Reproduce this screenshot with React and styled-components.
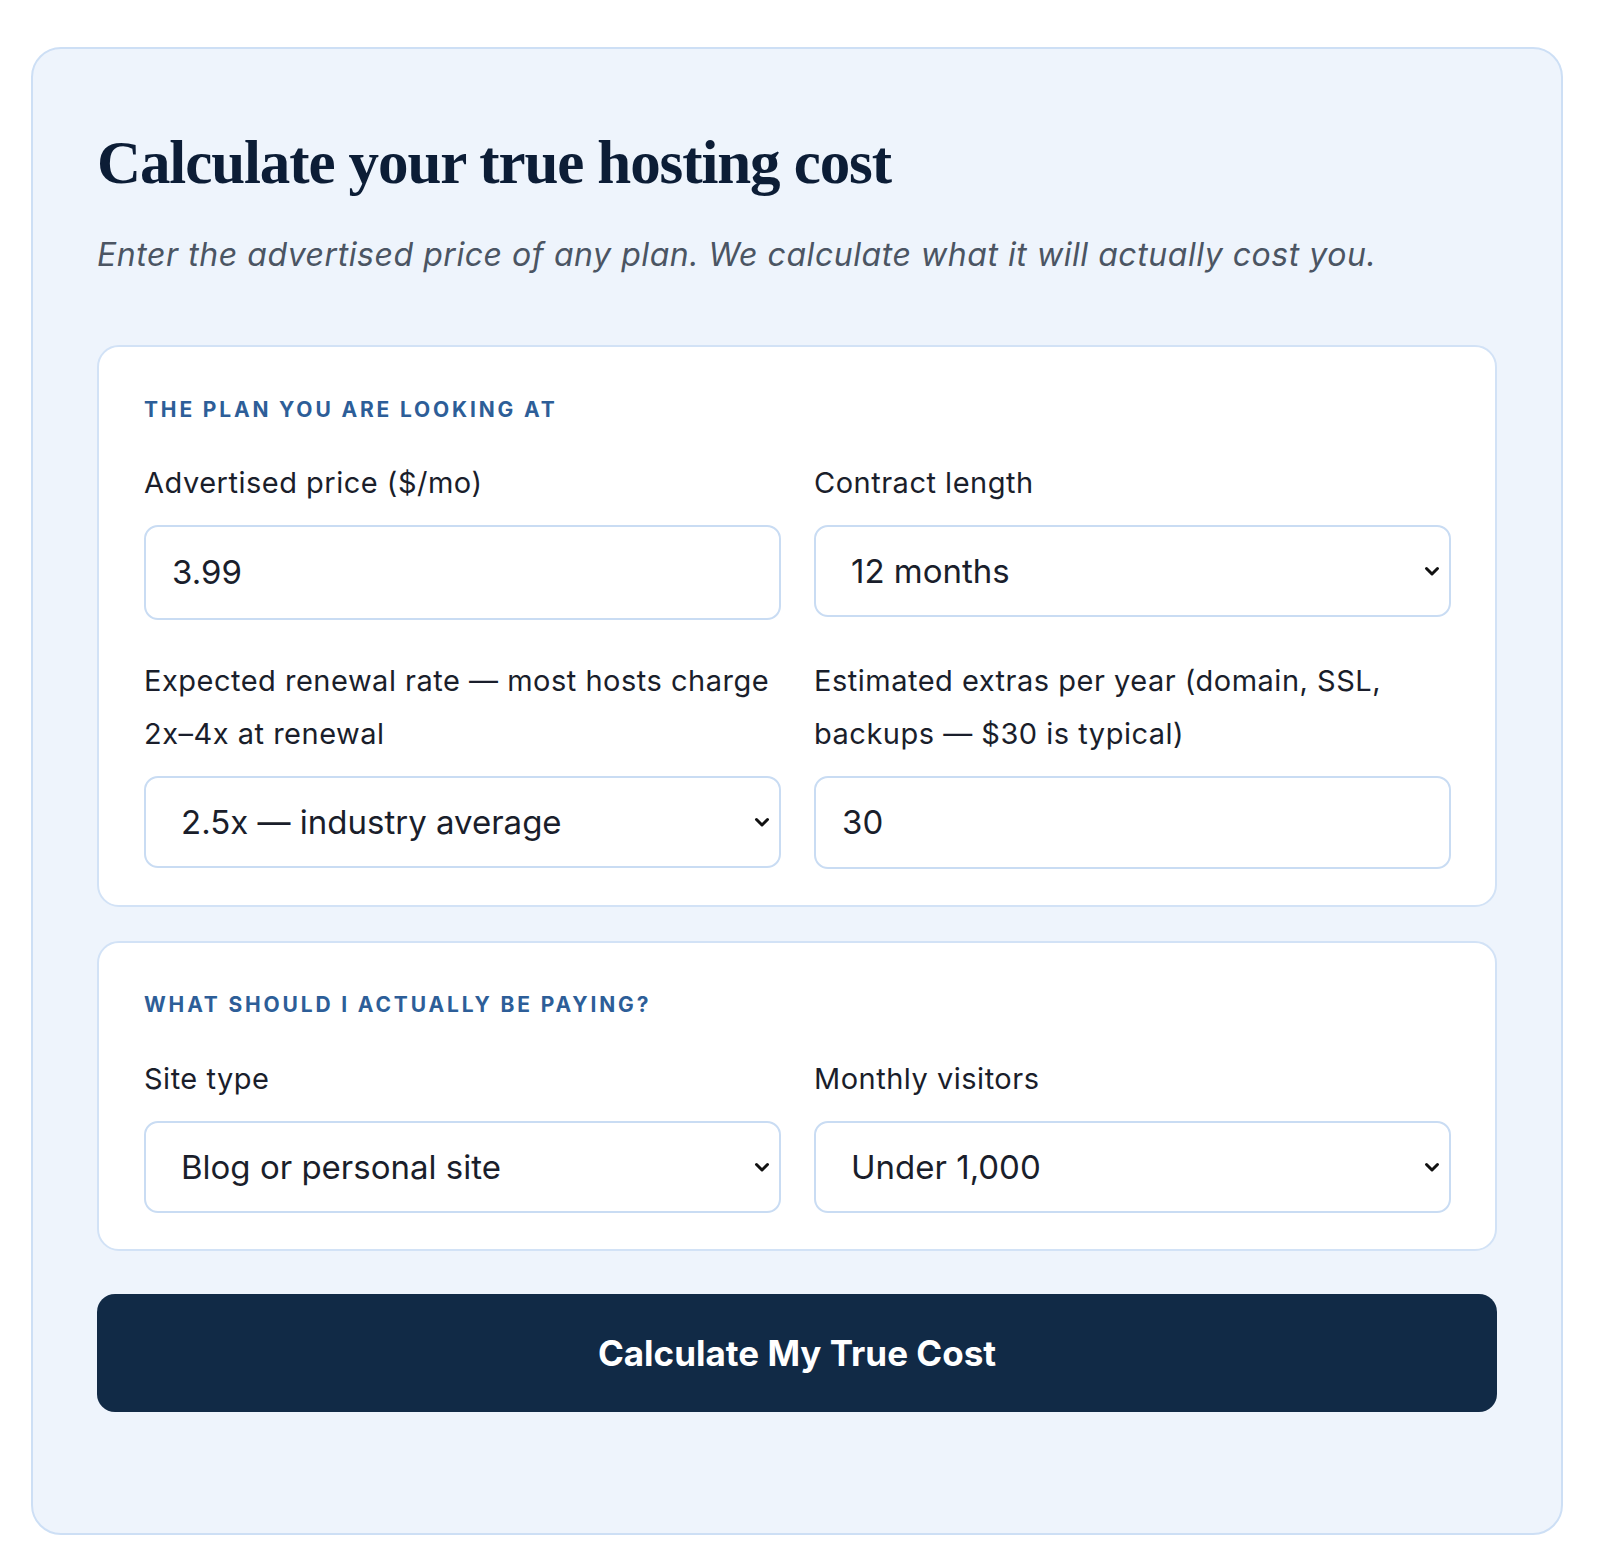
import React from "react";
import styled, { createGlobalStyle } from "styled-components";

const Global = createGlobalStyle`
  html, body { margin: 0; padding: 0; background: #ffffff; }
  * { box-sizing: border-box; }
`;

const Page = styled.div`
  padding: 47px 37px 23px 31px;
  font-family: Inter, "Noto Sans", sans-serif;
`;

const Card = styled.div`
  background: #eef4fc;
  border: 2px solid #cddff5;
  border-radius: 30px;
  padding: 77px 64px 121px;
`;

const Title = styled.h2`
  margin: 0;
  font-family: "Liberation Serif", "DejaVu Serif", serif;
  font-weight: 700;
  font-size: 61px;
  line-height: 1.22;
  color: #0c1d36;
  letter-spacing: -1.1px;
`;

const Subtitle = styled.p`
  margin: 32px 0 66px;
  font-style: italic;
  font-size: 32px;
  line-height: 1.45;
  letter-spacing: 0.55px;
  color: #4b5563;
`;

const Section = styled.section`
  background: #ffffff;
  border: 2px solid #d2e2f6;
  border-radius: 22px;
  padding: ${(p) => p.$top}px 44px 36px 45px;
  margin-bottom: ${(p) => p.$gap}px;
`;

const SectionHeading = styled.h3`
  margin: 0 0 ${(p) => p.$gap}px;
  font-size: 21px;
  line-height: 1.2;
  font-weight: 700;
  letter-spacing: 0.135em;
  text-transform: uppercase;
  color: #2d5e98;
`;

const Grid = styled.div`
  display: grid;
  grid-template-columns: 1fr 1fr;
  column-gap: 33px;
  row-gap: 34px;
  align-items: start;
`;

const Field = styled.div`
  display: flex;
  flex-direction: column;
  gap: 16px;
`;

const Label = styled.label`
  font-size: 29px;
  line-height: 53px;
  letter-spacing: 0.5px;
  color: #1a1e2b;
`;

const TextInput = styled.input`
  height: ${(p) => p.$h || 95}px;
  width: 100%;
  border: 2px solid #c9dcf3;
  border-radius: 14px;
  background: #ffffff;
  padding: 0 26px;
  font-family: inherit;
  font-size: 33px;
  color: #1a1e2b;
  outline: none;
`;

const SelectWrap = styled.div`
  position: relative;
  width: 100%;
`;

const Select = styled.select`
  display: block;
  appearance: none;
  -webkit-appearance: none;
  height: 92px;
  width: 100%;
  border: 2px solid #c9dcf3;
  border-radius: 14px;
  background-color: #ffffff;
  padding: 0 48px 0 35px;
  font-family: inherit;
  font-size: 33px;
  color: #1a1e2b;
  outline: none;
`;

const Chevron = styled.svg`
  position: absolute;
  right: 11px;
  top: 50%;
  width: 16px;
  height: 12px;
  margin-top: -6px;
  pointer-events: none;
`;

const Button = styled.button`
  display: block;
  width: 100%;
  height: 118px;
  border: none;
  border-radius: 18px;
  background: #112a46;
  color: #ffffff;
  font-family: inherit;
  font-weight: 700;
  font-size: 35px;
  cursor: pointer;
`;

function Dropdown({ defaultValue, options }) {
  return (
    <SelectWrap>
      <Select defaultValue={defaultValue}>
        {options.map(([v, t]) => (
          <option key={v} value={v}>
            {t}
          </option>
        ))}
      </Select>
      <Chevron viewBox="0 0 16 12" aria-hidden="true">
        <path d="M2.5 3.5 L8 9 L13.5 3.5" fill="none" stroke="#111" strokeWidth="3" strokeLinecap="round" strokeLinejoin="round" />
      </Chevron>
    </SelectWrap>
  );
}

export default function App() {
  return (
    <>
      <Global />
      <Page>
        <Card>
          <Title>Calculate your true hosting cost</Title>
          <Subtitle>
            Enter the advertised price of any plan. We calculate what it will actually cost you.
          </Subtitle>

          <Section $top={50} $gap={34}>
            <SectionHeading $gap={34}>The plan you are looking at</SectionHeading>
            <Grid>
              <Field>
                <Label>Advertised price ($/mo)</Label>
                <TextInput type="text" defaultValue="3.99" />
              </Field>
              <Field>
                <Label>Contract length</Label>
                <Dropdown
                  defaultValue="12"
                  options={[
                    ["1", "1 month"],
                    ["12", "12 months"],
                    ["24", "24 months"],
                    ["36", "36 months"],
                  ]}
                />
              </Field>
              <Field>
                <Label>Expected renewal rate — most hosts charge 2x–4x at renewal</Label>
                <Dropdown
                  defaultValue="2.5"
                  options={[
                    ["2", "2x — low"],
                    ["2.5", "2.5x — industry average"],
                    ["3", "3x — high"],
                  ]}
                />
              </Field>
              <Field>
                <Label>Estimated extras per year (domain, SSL, backups — $30 is typical)</Label>
                <TextInput type="text" defaultValue="30" $h={93} />
              </Field>
            </Grid>
          </Section>

          <Section $top={49} $gap={43}>
            <SectionHeading $gap={35}>What should I actually be paying?</SectionHeading>
            <Grid>
              <Field>
                <Label>Site type</Label>
                <Dropdown
                  defaultValue="blog"
                  options={[
                    ["blog", "Blog or personal site"],
                    ["biz", "Business site"],
                    ["shop", "Online store"],
                  ]}
                />
              </Field>
              <Field>
                <Label>Monthly visitors</Label>
                <Dropdown
                  defaultValue="1k"
                  options={[
                    ["1k", "Under 1,000"],
                    ["10k", "1,000 – 10,000"],
                    ["100k", "10,000 – 100,000"],
                  ]}
                />
              </Field>
            </Grid>
          </Section>

          <Button type="button">Calculate My True Cost</Button>
        </Card>
      </Page>
    </>
  );
}
